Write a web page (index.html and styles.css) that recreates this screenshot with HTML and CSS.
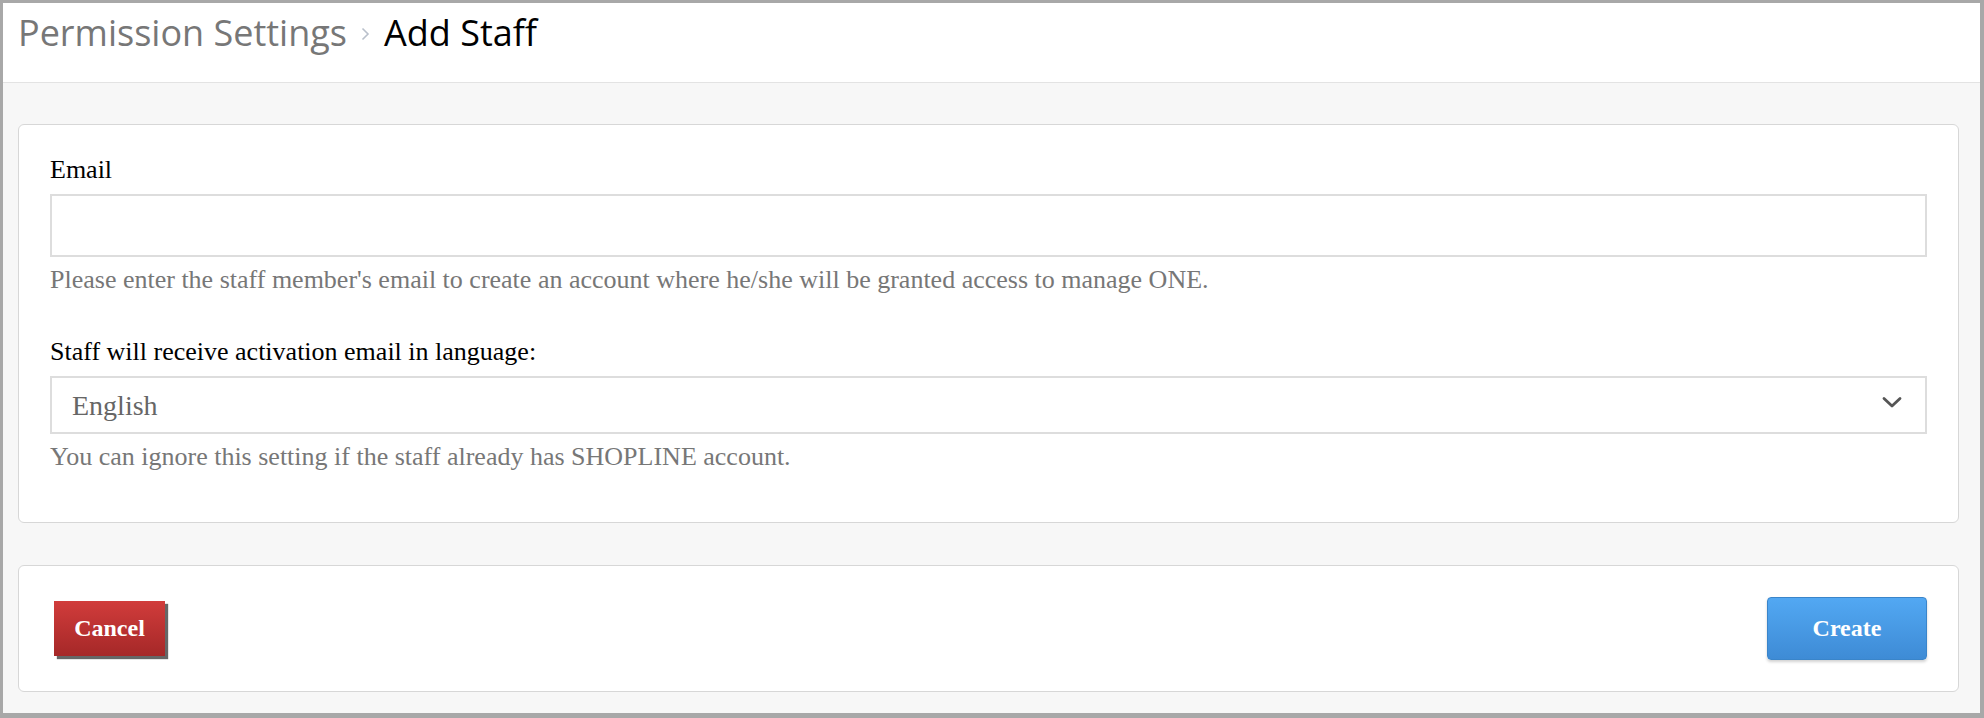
FILE: index.html
```html
<!DOCTYPE html>
<html lang="en">
<head>
  <meta charset="UTF-8">
  <title>Add Staff</title>
  <link rel="stylesheet" href="styles.css">
</head>
<body>
  <div class="frame">

    <!-- PAGE HEADER / BREADCRUMB -->
    <div class="page-header">
      <span class="crumb">Permission Settings</span>
      <svg class="crumb-sep" width="9" height="14" viewBox="0 0 9 14">
        <path d="M1.5 1.5 L7 7 L1.5 12.5" fill="none" stroke="#b9c0cb" stroke-width="1.6"/>
      </svg>
      <span class="crumb-current">Add Staff</span>
    </div>

    <div class="page-body">

      <!-- FORM CARD -->
      <div class="card form-card">
        <div class="field">
          <label class="field-label" for="email">Email</label>
          <input class="text-input" id="email" type="email">
          <p class="help">Please enter the staff member's email to create an account where he/she will be granted access to manage ONE.</p>
        </div>

        <div class="field">
          <label class="field-label" for="lang">Staff will receive activation email in language:</label>
          <div class="select-wrap">
            <select class="select-input" id="lang">
              <option>English</option>
            </select>
            <svg class="select-caret" width="22" height="13" viewBox="0 0 22 13">
              <path d="M3 2.5 L11 10 L19 2.5" fill="none" stroke="#555" stroke-width="2.8" stroke-linecap="round" stroke-linejoin="round"/>
            </svg>
          </div>
          <p class="help">You can ignore this setting if the staff already has SHOPLINE account.</p>
        </div>
      </div>

      <!-- ACTIONS CARD -->
      <div class="card actions-card">
        <a class="btn btn-cancel">Cancel</a>
        <a class="btn btn-create">Create</a>
      </div>

    </div>
  </div>
</body>
</html>
```

FILE: styles.css
```css
/* Page frame: grey border around the whole window */
html, body {
  margin: 0;
  padding: 0;
  height: 100%;
}

body {
  font-family: "Liberation Serif", "Times New Roman", serif;
  color: #000;
}

.frame {
  box-sizing: border-box;
  height: 100vh;
  border-style: solid;
  border-color: #a8a8a8;
  border-width: 3px 4px 5px 3px;
  display: flex;
  flex-direction: column;
  background: #f7f7f7;
}

/* HEADER */
.page-header {
  flex: none;
  height: 80px;
  background: #fff;
  border-bottom: 1px solid #e3e3e3;
  display: flex;
  align-items: center;
  gap: 14px;
  padding: 0 0 21px 15px;
  box-sizing: border-box;
  font-family: "Open Sans", "Noto Sans", sans-serif;
  font-size: 36px;
}

.crumb {
  color: #777;
}

.crumb-sep {
  margin-top: 4px;
}

.crumb-current {
  color: #000;
}

/* BODY */
.page-body {
  flex: 1;
  display: flex;
  flex-direction: column;
  gap: 42px;
  padding: 41px 21px 0 15px;
}

.card {
  background: #fff;
  border: 1px solid #d7d7d7;
  border-radius: 6px;
}

.form-card {
  padding: 30px 31px 50px 31px;
  display: flex;
  flex-direction: column;
  gap: 42px;
}

.field-label {
  display: block;
  font-size: 26px;
  line-height: 30px;
  margin-bottom: 9px;
}

.text-input,
.select-input {
  display: block;
  box-sizing: border-box;
  width: 100%;
  border: 2px solid #dddddd;
  border-radius: 0;
  background: #fff;
  outline: none;
  margin: 0;
  font-family: "Liberation Serif", "Times New Roman", serif;
}

.text-input {
  height: 63px;
}

.select-wrap {
  position: relative;
  margin-top: 1px;
}

.select-input {
  height: 58px;
  appearance: none;
  -webkit-appearance: none;
  padding: 0 20px;
  font-size: 28px;
  color: #666;
}

.select-caret {
  position: absolute;
  right: 24px;
  top: 20px;
  pointer-events: none;
}

.help {
  margin: 8px 0 0 0;
  font-size: 26px;
  line-height: 30px;
  color: #777;
}

/* ACTIONS */
.actions-card {
  padding: 31px;
  display: flex;
  justify-content: space-between;
  align-items: center;
}

.btn {
  display: flex;
  align-items: center;
  justify-content: center;
  box-sizing: border-box;
  color: #fff;
  font-weight: bold;
  font-size: 24px;
  cursor: pointer;
}

.btn-cancel {
  width: 111px;
  height: 55px;
  margin-left: 4px;
  background: linear-gradient(to bottom, #d13c3b, #a52828);
  box-shadow: 3px 3px 1px #666;
}

.btn-create {
  width: 160px;
  height: 63px;
  border: 1px solid #3a85ca;
  border-radius: 4px;
  background: linear-gradient(to bottom, #52a8f3, #3e8bd5);
  box-shadow: 0 2px 3px rgba(0, 0, 0, 0.18);
}
```
